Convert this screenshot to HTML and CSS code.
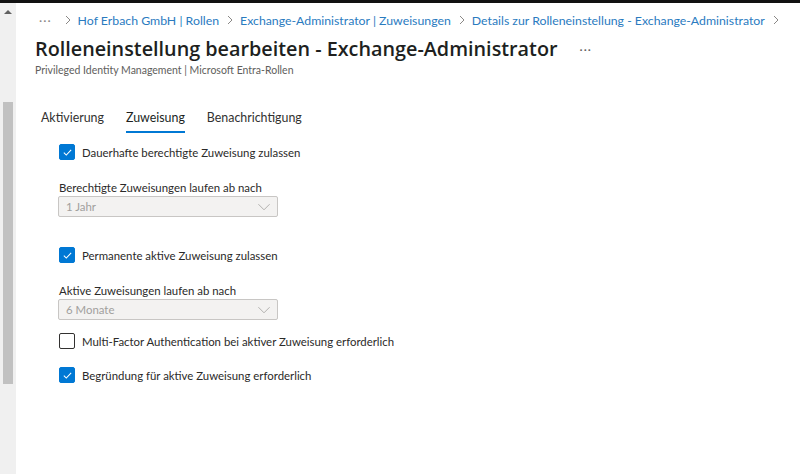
FILE: index.html
```html
<!DOCTYPE html>
<html>
<head>
    <title>Rolleneinstellung bearbeiten - Exchange-Administrator</title>
    <link rel="stylesheet" href="styles.css">
</head>
<body>
    <div class="window">
        <div class="scrollbar">
            <div class="scroll-up"></div>
            <div class="scroll-thumb"></div>
        </div>
        <div class="page">
            <nav class="breadcrumb">
                <span class="crumb-more">&middot;&middot;&middot;</span>
                <svg class="sep" viewBox="0 0 6 10"><path d="M1 1l4 4-4 4" /></svg>
                <a href="#">Hof Erbach GmbH | Rollen</a>
                <svg class="sep" viewBox="0 0 6 10"><path d="M1 1l4 4-4 4" /></svg>
                <a href="#">Exchange-Administrator | Zuweisungen</a>
                <svg class="sep" viewBox="0 0 6 10"><path d="M1 1l4 4-4 4" /></svg>
                <a href="#">Details zur Rolleneinstellung - Exchange-Administrator</a>
                <svg class="sep" viewBox="0 0 6 10"><path d="M1 1l4 4-4 4" /></svg>
            </nav>

            <div class="title-row">
                <h1>Rolleneinstellung bearbeiten - Exchange-Administrator</h1>
                <span class="title-more">&middot;&middot;&middot;</span>
            </div>
            <div class="subtitle">Privileged Identity Management | Microsoft Entra-Rollen</div>

            <div class="tabs">
                <div class="tab">Aktivierung</div>
                <div class="tab active">Zuweisung</div>
                <div class="tab">Benachrichtigung</div>
            </div>

            <div class="settings">
                <label class="check">
                    <span class="box checked"><svg viewBox="0 0 16 16"><path d="M3.5 8.2l3 3 6-6.4" /></svg></span>
                    Dauerhafte berechtigte Zuweisung zulassen
                </label>

                <div class="field">
                    <div class="field-label">Berechtigte Zuweisungen laufen ab nach</div>
                    <div class="dropdown">
                        <span>1 Jahr</span>
                        <svg viewBox="0 0 16 10"><path d="M1 1.5l7 7 7-7" /></svg>
                    </div>
                </div>

                <label class="check after-field">
                    <span class="box checked"><svg viewBox="0 0 16 16"><path d="M3.5 8.2l3 3 6-6.4" /></svg></span>
                    Permanente aktive Zuweisung zulassen
                </label>

                <div class="field">
                    <div class="field-label">Aktive Zuweisungen laufen ab nach</div>
                    <div class="dropdown">
                        <span>6 Monate</span>
                        <svg viewBox="0 0 16 10"><path d="M1 1.5l7 7 7-7" /></svg>
                    </div>
                </div>

                <label class="check tight">
                    <span class="box"></span>
                    Multi-Factor Authentication bei aktiver Zuweisung erforderlich
                </label>

                <label class="check">
                    <span class="box checked"><svg viewBox="0 0 16 16"><path d="M3.5 8.2l3 3 6-6.4" /></svg></span>
                    Begründung für aktive Zuweisung erforderlich
                </label>
            </div>
        </div>
    </div>
</body>
</html>
```

FILE: styles.css
```css
body {
    margin: 0;
    padding: 0;
    font-family: Lato, "Open Sans", sans-serif;
    background-color: #fff;
    color: #323130;
    border-top: 3px solid #111;
    height: 471px;
    overflow: hidden;
}

.window {
    display: flex;
    height: 100%;
}

.scrollbar {
    width: 16px;
    flex-shrink: 0;
    background-color: #f0f0f0;
    display: flex;
    flex-direction: column;
    align-items: center;
}

.scroll-up {
    width: 0;
    height: 0;
    margin-top: 7px;
    border-left: 4px solid transparent;
    border-right: 4px solid transparent;
    border-bottom: 4px solid #606060;
}

.scroll-thumb {
    width: 10px;
    height: 282px;
    margin-top: 88px;
    background-color: #c1c1c1;
}

.page {
    flex: 1;
    min-width: 0;
    padding-left: 19px;
    white-space: nowrap;
}

.breadcrumb {
    display: flex;
    align-items: center;
    font-size: 12.3px;
    height: 20px;
    margin-top: 7px;
    color: #2a7bbf;
}

.breadcrumb a {
    color: #2a7bbf;
    text-decoration: none;
}

.crumb-more {
    color: #8a8886;
    margin-left: 4px;
    margin-right: 13px;
    letter-spacing: 1px;
}

.sep {
    width: 6px;
    height: 10px;
    margin: 0 7px 0 0;
    fill: none;
    stroke: #8a8886;
    stroke-width: 1;
}

.breadcrumb a + .sep {
    margin-left: 8px;
}

.title-row {
    display: flex;
    align-items: center;
    margin-top: 4px;
}

h1 {
    margin: 0;
    font-family: "Open Sans", sans-serif;
    font-size: 19.8px;
    font-weight: 600;
    color: #201f1e;
    line-height: 30px;
}

.title-more {
    color: #605e5c;
    margin-left: 22px;
    font-size: 12px;
    letter-spacing: 1px;
}

.subtitle {
    font-size: 10.5px;
    color: #605e5c;
    margin-top: 0;
}

.tabs {
    display: flex;
    gap: 22px;
    margin-top: 32px;
    margin-left: 6px;
}

.tab {
    font-size: 12.4px;
    line-height: 20px;
    padding-bottom: 3px;
    border-bottom: 2px solid transparent;
    color: #323130;
}

.tab.active {
    border-bottom-color: #0078d4;
    color: #201f1e;
}

.settings {
    padding-left: 24px;
    margin-top: 9px;
    font-size: 11.4px;
    color: #2b2a29;
}

.check {
    display: flex;
    align-items: center;
    gap: 7px;
    height: 20px;
    margin-bottom: 14px;
}

.check.after-field {
    margin-top: 28px;
}

.check.tight {
    margin-top: 11px;
}

.field-label {
    line-height: 18px;
    padding-top: 3px;
}

.box {
    width: 14px;
    height: 14px;
    border: 1px solid #323130;
    border-radius: 2px;
    display: flex;
    align-items: center;
    justify-content: center;
}

.box.checked {
    background-color: #0078d4;
    border-color: #0078d4;
}

.box svg {
    width: 13px;
    height: 13px;
    fill: none;
    stroke: #fff;
    stroke-width: 1.3;
}

.dropdown {
    width: 205px;
    height: 19px;
    margin-top: -1px;
    margin-left: -1px;
    border: 1px solid #c8c6c4;
    border-radius: 2px;
    background-color: #f3f2f1;
    color: #a19f9d;
    display: flex;
    align-items: center;
    justify-content: space-between;
    padding: 0 6px 0 7px;
}

.dropdown svg {
    width: 14px;
    height: 8px;
    fill: none;
    stroke: #a19f9d;
    stroke-width: 1;
}
```
